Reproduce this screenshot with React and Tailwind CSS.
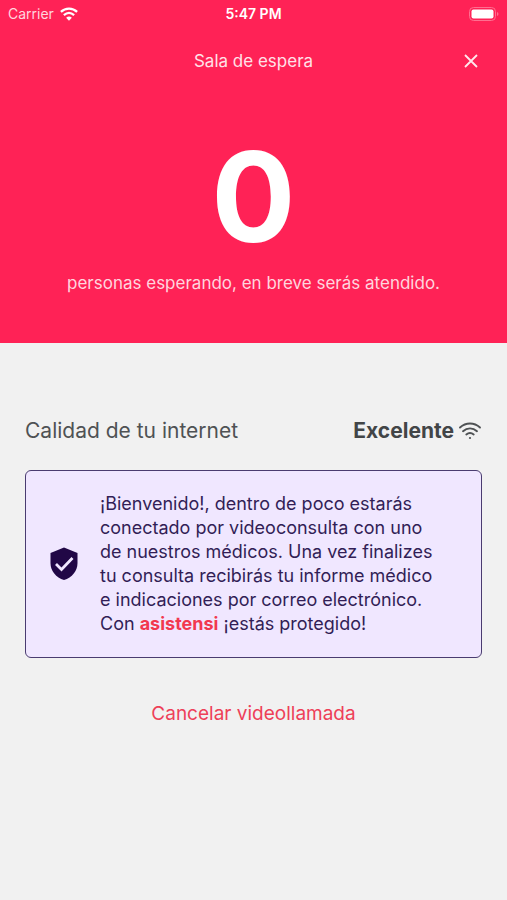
export default function App() {
  return (
    <div className="min-h-screen bg-[#f1f1f1] font-['Inter',sans-serif]">
      <section className="bg-[#ff2256] pb-12 text-white">
        <div className="grid h-7 grid-cols-3 items-center px-2 text-sm">
          <div className="flex items-center gap-1.5">
            <span className="text-[#ffd5de]">Carrier</span>
            <svg viewBox="0 0 20 15" className="h-3.5 w-[18px]" fill="none" stroke="currentColor" strokeWidth="2.5">
              <path d="M1 5.200C6 .4 14 .4 19 5.200M4.300 8.800C7.800 5.700 12.200 5.700 15.700 8.800" />
              <path d="M10 15 6.800 11.600q3.200-2.400 6.400 0Z" fill="currentColor" stroke="none" />
            </svg>
          </div>
          <span className="text-center font-semibold">5:47 PM</span>
          <svg viewBox="0 0 30 14" className="h-3.5 w-[30px] justify-self-end" fill="none">
            <rect x="0.500" y="0.500" width="26" height="13" rx="4" stroke="#ff6f90" />
            <rect x="2.500" y="2.500" width="22" height="9" rx="2" fill="white" />
            <path d="M28 5v4q1.500-.5 1.500-2T28 5" fill="#ff6f90" />
          </svg>
        </div>
        <header className="grid h-16 grid-cols-[48px_1fr_48px] items-center px-3">
          <h1 className="col-start-2 pt-0.5 text-center text-[17px] leading-6 text-[#ffe1e8]">Sala de espera</h1>
          <button type="button" aria-label="Cerrar" className="flex h-10 items-center justify-center pt-0.5">
            <svg viewBox="0 0 14 14" className="size-3.5" stroke="#ffe8ed" strokeWidth="1.800"><path d="m1 1 12 12M13 1 1 13" /></svg>
          </button>
        </header>
        <p className="mt-[41px] text-center text-[125px] leading-[128px] font-bold">0</p>
        <p className="mt-2.5 text-center text-[17px] leading-6 text-[#ffd5de]">personas esperando, en breve serás atendido.</p>
      </section>
      <main className="px-[25px] pt-[72px]">
        <div className="flex items-center justify-between text-[21px] leading-8 text-[#4f5254]">
          <h2>Calidad de tu internet</h2>
          <p className="flex items-center gap-1 font-bold text-[#424547]">
            Excelente
            <svg viewBox="0 0 24 18" className="h-[18px] w-6" fill="none" stroke="#4f5254" strokeWidth="1.900" strokeLinecap="round">
              <path d="M2 5.500C7.800.2 16.200.2 22 5.500M5 9.200C9.200 5.400 14.800 5.400 19 9.200M8.300 12.500C10.600 10.600 13.400 10.600 15.700 12.500" />
              <circle cx="12" cy="16" r="1.100" fill="#4f5254" stroke="none" />
            </svg>
          </p>
        </div>
        <div className="mt-[23px] flex items-center gap-5 rounded-md border border-[#4a3c70] bg-[#f0e7ff] py-[21px] pr-10 pl-[22px]">
          <svg viewBox="0 0 32 36" className="h-9 w-8 shrink-0">
            <path d="M16 1.500 29.500 7v10c0 8-5.500 14.500-13.500 17C8 31.500 2.500 25 2.500 17V7Z" fill="#210746" />
            <path d="m8 18 5.500 5.500L24.500 12" fill="none" stroke="#f0e7ff" strokeWidth="2.800" />
          </svg>
          <p className="text-lg leading-6 whitespace-nowrap text-[#321e56]">
            ¡Bienvenido!, dentro de poco estarás<br />
            conectado por videoconsulta con uno<br />
            de nuestros médicos. Una vez finalizes<br />
            tu consulta recibirás tu informe médico<br />
            e indicaciones por correo electrónico.<br />
            Con <strong className="font-bold text-[#f2384f]">asistensi</strong> ¡estás protegido!
          </p>
        </div>
        <div className="mt-10 flex justify-center">
          <button type="button" className="text-[19px] leading-8 text-[#ee4058]">Cancelar videollamada</button>
        </div>
      </main>
    </div>
  );
}
